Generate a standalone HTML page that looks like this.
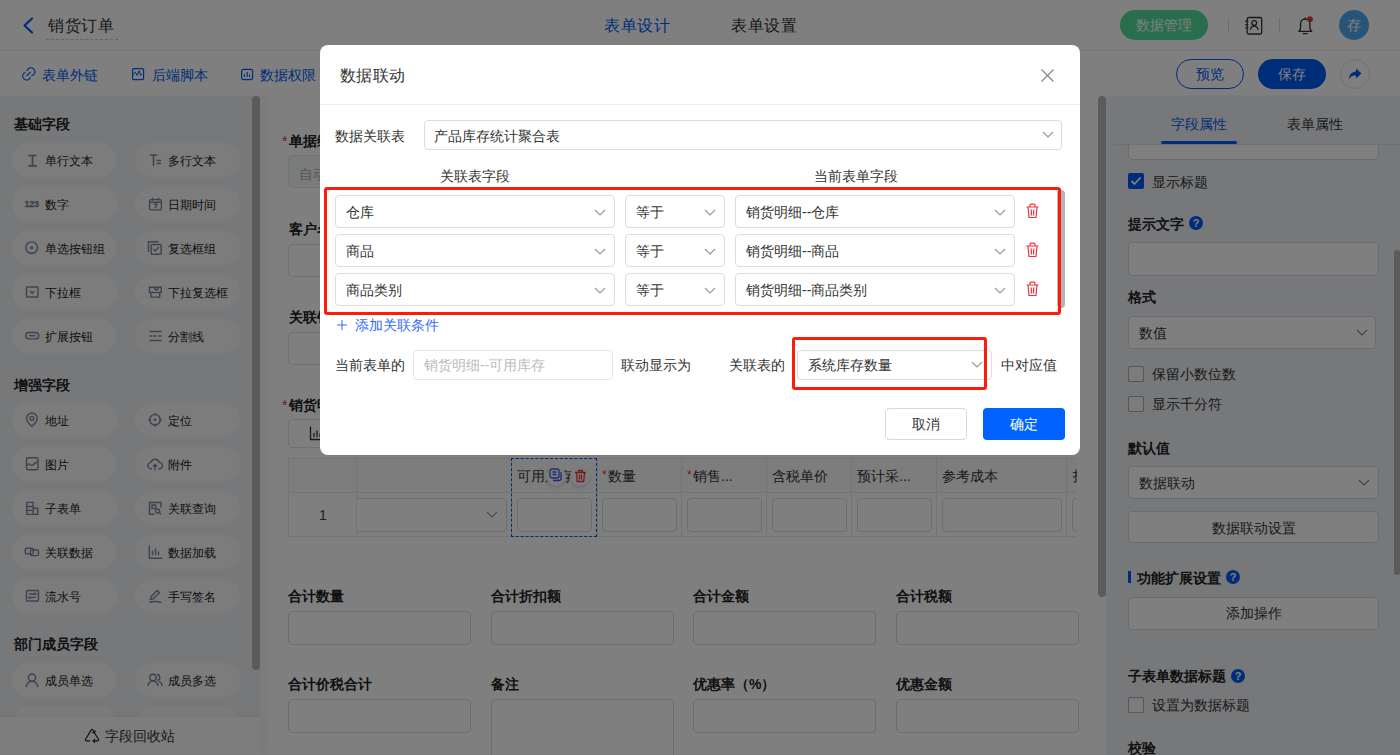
<!DOCTYPE html>
<html><head><meta charset="utf-8">
<style>
*{box-sizing:border-box;margin:0;padding:0}
html,body{width:1400px;height:755px;overflow:hidden;background:#fff;font-family:"Liberation Sans",sans-serif;color:#333;font-size:14px}
.a{position:absolute}
.t{position:absolute;line-height:20px;white-space:nowrap;font-size:14px}
.b{font-weight:bold;color:#222}
.inp{position:absolute;border:1px solid #dcdfe6;border-radius:4px;background:#fff}
.chev{position:absolute;width:10px;height:6px}
svg{display:block}
</style></head><body>

<!-- ================= HEADER ================= -->
<div class="a" style="left:0;top:0;width:1400px;height:50px;background:#fff"></div>
<svg class="a" style="left:22px;top:17px" width="12" height="17" viewBox="0 0 12 17"><path d="M10 1.5L2.5 8.5L10 15.5" fill="none" stroke="#005bf5" stroke-width="2.2" stroke-linecap="round" stroke-linejoin="round"/></svg>
<div class="t" style="left:48px;top:16px;font-size:16px;color:#333;letter-spacing:0.5px">销货订单</div>
<div class="a" style="left:46px;top:39px;width:72px;border-top:1px dashed #c8c8c8"></div>
<div class="t" style="left:604px;top:16px;font-size:16px;color:#005bf5;letter-spacing:0.5px">表单设计</div>
<div class="t" style="left:731px;top:16px;font-size:16px;color:#333;letter-spacing:0.5px">表单设置</div>

<div class="a" style="left:1120px;top:10px;width:88px;height:30px;border-radius:15px;background:#52dc98"></div>
<div class="t" style="left:1120px;top:15px;width:88px;text-align:center;color:#fff">数据管理</div>
<div class="a" style="left:1228px;top:18px;width:1px;height:14px;background:#d8d8d8"></div>
<div class="a" style="left:1279px;top:18px;width:1px;height:14px;background:#d8d8d8"></div>
<svg class="a" style="left:1244px;top:16px" width="20" height="19" viewBox="0 0 20 19"><rect x="3.2" y="1.5" width="14.5" height="16.5" rx="1.6" fill="none" stroke="#333" stroke-width="1.3"/><circle cx="10.2" cy="7" r="2.4" fill="none" stroke="#333" stroke-width="1.3"/><path d="M6.3 13.8c.5-2.5 1.9-3.6 3.9-3.6s3.4 1.1 3.9 3.6" fill="none" stroke="#333" stroke-width="1.3"/><path d="M1 5.3h3.5M1 8.7h3.5M1 12h3.5" stroke="#333" stroke-width="1.1"/></svg>
<svg class="a" style="left:1296px;top:15px" width="20" height="21" viewBox="0 0 20 21"><path d="M2.8 16.3Q4.6 15.2 4.6 12.2V8.6A4.65 4.65 0 0 1 13.9 8.6V12.2Q13.9 15.2 15.7 16.3Z" fill="none" stroke="#333" stroke-width="1.35" stroke-linejoin="round"/><path d="M7 18.6h4.5" stroke="#333" stroke-width="1.3"/><path d="M9.25 2.4v1.6" stroke="#333" stroke-width="1.3"/><circle cx="14" cy="4.2" r="2.9" fill="#e0393e"/></svg>
<div class="a" style="left:1339px;top:10px;width:30px;height:30px;border-radius:50%;background:#50a8f0"></div>
<div class="t" style="left:1339px;top:15px;width:30px;text-align:center;color:#fff">存</div>

<!-- ================= TOOLBAR ================= -->
<div class="a" style="left:0;top:50px;width:1400px;height:45px;background:#fff"></div>
<div class="a" style="left:0;top:50px;width:1400px;height:1px;background:#ededed"></div>
<svg class="a" style="left:21px;top:67px" width="15" height="15" viewBox="0 0 15 15"><path d="M6.06 3.59A4 4 0 1 1 10.77 8.69" fill="none" stroke="#005bf5" stroke-width="1.1" stroke-linecap="round"/><path d="M9.35 10.44A4 4 0 1 1 3.97 5.4" fill="none" stroke="#005bf5" stroke-width="1.1" stroke-linecap="round"/><path d="M5.9 8.5l3.5-3.3" stroke="#005bf5" stroke-width="1.1" stroke-linecap="round"/></svg>
<div class="t" style="left:42px;top:65px;color:#005bf5">表单外链</div>
<svg class="a" style="left:131px;top:67px" width="14" height="14" viewBox="0 0 14 14"><rect x="1.6" y="1.6" width="11" height="11" rx="1.3" fill="none" stroke="#005bf5" stroke-width="1.2"/><path d="M2 7.2l2.3-2 1.8 3.2 2-4.6 1.5 4.4 1.4-1" fill="none" stroke="#005bf5" stroke-width="1"/></svg>
<div class="t" style="left:152px;top:65px;color:#005bf5">后端脚本</div>
<svg class="a" style="left:240px;top:67px" width="14" height="14" viewBox="0 0 14 14"><rect x="1.6" y="2.4" width="11" height="10.2" rx="2" fill="none" stroke="#005bf5" stroke-width="1.2"/><path d="M4.4 10V7.2M7.2 10V5M9.6 10V7.2" stroke="#005bf5" stroke-width="1.1"/></svg>
<div class="t" style="left:260px;top:65px;color:#005bf5">数据权限</div>

<div class="a" style="left:1176px;top:59px;width:68px;height:30px;border-radius:15px;border:1px solid #005bf5"></div>
<div class="t" style="left:1176px;top:64px;width:68px;text-align:center;color:#005bf5">预览</div>
<div class="a" style="left:1258px;top:59px;width:68px;height:30px;border-radius:15px;background:#005bf5"></div>
<div class="t" style="left:1258px;top:64px;width:68px;text-align:center;color:#fff">保存</div>
<div class="a" style="left:1340px;top:59px;width:30px;height:30px;border-radius:50%;border:1px solid #dde3ee"></div>
<svg class="a" style="left:1347px;top:66px" width="16" height="16" viewBox="0 0 16 16"><path d="M9 2.5l5.5 5-5.5 5V9.5C5.5 9.3 3.3 10.5 1.8 13.3 2.2 8.8 4.5 6 9 5.6z" fill="#005bf5"/></svg>

<!-- SIDEBAR -->
<div class="a" style="left:0px;top:96px;width:268px;height:659px;background:#eff1f4"></div>
<div class="a" style="left:0px;top:95px;width:268px;height:1px;background:#f7f8f9"></div>
<div class="t" style="left:14px;top:114px;font-size:14px;color:#222;font-weight:bold;">基础字段</div>
<div class="t" style="left:14px;top:375px;font-size:14px;color:#222;font-weight:bold;">增强字段</div>
<div class="t" style="left:14px;top:634px;font-size:14px;color:#222;font-weight:bold;">部门成员字段</div>
<div class="a" style="left:12px;top:143px;width:105px;height:34px;border-radius:17px;background:#f8f9fb"></div>
<svg class="a" style="left:24px;top:152px" width="16" height="16" viewBox="0 0 16 16"><path d="M4.3 3.5h8.5M4.3 13.8h8.5M8.5 3.5v10.3" fill="none" stroke="#7886a0" stroke-width="1.7"/></svg>
<div class="t" style="left:45px;top:151px;font-size:12px;color:#1a1a1a;">单行文本</div>
<div class="a" style="left:135px;top:143px;width:105px;height:34px;border-radius:17px;background:#f8f9fb"></div>
<svg class="a" style="left:147px;top:152px" width="16" height="16" viewBox="0 0 16 16"><path d="M2.8 3h7.5M6.5 3v11M9.5 8.5h4.5M9.5 11.5h4.5" fill="none" stroke="#7886a0" stroke-width="1.6"/></svg>
<div class="t" style="left:168px;top:151px;font-size:12px;color:#1a1a1a;">多行文本</div>
<div class="a" style="left:12px;top:187px;width:105px;height:34px;border-radius:17px;background:#f8f9fb"></div>
<svg class="a" style="left:24px;top:196px" width="16" height="16" viewBox="0 0 16 16"><text x="0.5" y="11" font-size="9" font-weight="bold" fill="#7886a0" stroke="#7886a0" stroke-width="0.35" font-family="Liberation Sans" letter-spacing="-0.2">123</text></svg>
<div class="t" style="left:45px;top:195px;font-size:12px;color:#1a1a1a;">数字</div>
<div class="a" style="left:135px;top:187px;width:105px;height:34px;border-radius:17px;background:#f8f9fb"></div>
<svg class="a" style="left:147px;top:196px" width="16" height="16" viewBox="0 0 16 16"><rect x="2.6" y="3.6" width="11.8" height="10.3" rx="1.5" fill="none" stroke="#7886a0" stroke-width="1.4"/><path d="M2.6 6.3h11.8M5.5 1.8v3M11.5 1.8v3M6.8 8.3h3.2l-1.7 4" fill="none" stroke="#7886a0" stroke-width="1.4"/></svg>
<div class="t" style="left:168px;top:195px;font-size:12px;color:#1a1a1a;">日期时间</div>
<div class="a" style="left:12px;top:231px;width:105px;height:34px;border-radius:17px;background:#f8f9fb"></div>
<svg class="a" style="left:24px;top:240px" width="16" height="16" viewBox="0 0 16 16"><circle cx="7.7" cy="7.7" r="5.8" fill="none" stroke="#7886a0" stroke-width="1.4"/><circle cx="7.7" cy="7.7" r="1.5" fill="#7886a0"/></svg>
<div class="t" style="left:45px;top:239px;font-size:12px;color:#1a1a1a;">单选按钮组</div>
<div class="a" style="left:135px;top:231px;width:105px;height:34px;border-radius:17px;background:#f8f9fb"></div>
<svg class="a" style="left:147px;top:240px" width="16" height="16" viewBox="0 0 16 16"><path d="M1.5 12V1.8h10" fill="none" stroke="#7886a0" stroke-width="1.4"/><rect x="4.2" y="4.5" width="10" height="9.7" rx="1" fill="none" stroke="#7886a0" stroke-width="1.4"/><path d="M6.3 9l2 2 3.5-4" fill="none" stroke="#7886a0" stroke-width="1.4"/></svg>
<div class="t" style="left:168px;top:239px;font-size:12px;color:#1a1a1a;">复选框组</div>
<div class="a" style="left:12px;top:275px;width:105px;height:34px;border-radius:17px;background:#f8f9fb"></div>
<svg class="a" style="left:24px;top:284px" width="16" height="16" viewBox="0 0 16 16"><rect x="2.5" y="3" width="11.5" height="10" rx="1" fill="none" stroke="#7886a0" stroke-width="1.4"/><path d="M6 7l2.2 2.2L10.5 7" fill="none" stroke="#7886a0" stroke-width="1.4"/></svg>
<div class="t" style="left:45px;top:283px;font-size:12px;color:#1a1a1a;">下拉框</div>
<div class="a" style="left:135px;top:275px;width:105px;height:34px;border-radius:17px;background:#f8f9fb"></div>
<svg class="a" style="left:147px;top:284px" width="16" height="16" viewBox="0 0 16 16"><path d="M2.5 3.2h11.7v5.3H2.5zM4 8.5v4.6h8.7V8.5M7.8 3.2v1.6l1.6 1.3 1.6-1.3V3.2" fill="none" stroke="#7886a0" stroke-width="1.4"/></svg>
<div class="t" style="left:168px;top:283px;font-size:12px;color:#1a1a1a;">下拉复选框</div>
<div class="a" style="left:12px;top:319px;width:105px;height:34px;border-radius:17px;background:#f8f9fb"></div>
<svg class="a" style="left:24px;top:328px" width="16" height="16" viewBox="0 0 16 16"><rect x="1.7" y="4.5" width="13" height="6.4" rx="3.2" fill="none" stroke="#7886a0" stroke-width="1.4"/><path d="M5 7.7h6.3" fill="none" stroke="#7886a0" stroke-width="1.4"/></svg>
<div class="t" style="left:45px;top:327px;font-size:12px;color:#1a1a1a;">扩展按钮</div>
<div class="a" style="left:135px;top:319px;width:105px;height:34px;border-radius:17px;background:#f8f9fb"></div>
<svg class="a" style="left:147px;top:328px" width="16" height="16" viewBox="0 0 16 16"><path d="M2.5 3.5h12M2.5 12.5h12M2.5 8h3M6.8 8h3M11.3 8h3.2" fill="none" stroke="#7886a0" stroke-width="1.4"/></svg>
<div class="t" style="left:168px;top:327px;font-size:12px;color:#1a1a1a;">分割线</div>
<div class="a" style="left:12px;top:403px;width:105px;height:34px;border-radius:17px;background:#f8f9fb"></div>
<svg class="a" style="left:24px;top:412px" width="16" height="16" viewBox="0 0 16 16"><path d="M7.9 14.3S2.6 10 2.6 6.3a5.3 5.3 0 0 1 10.6 0c0 3.7-5.3 8-5.3 8z" fill="none" stroke="#7886a0" stroke-width="1.4"/><circle cx="7.9" cy="6.3" r="1.9" fill="none" stroke="#7886a0" stroke-width="1.4"/></svg>
<div class="t" style="left:45px;top:411px;font-size:12px;color:#1a1a1a;">地址</div>
<div class="a" style="left:135px;top:403px;width:105px;height:34px;border-radius:17px;background:#f8f9fb"></div>
<svg class="a" style="left:147px;top:412px" width="16" height="16" viewBox="0 0 16 16"><circle cx="8" cy="7.7" r="5.3" fill="none" stroke="#7886a0" stroke-width="1.4"/><circle cx="8" cy="7.7" r="1.3" fill="#7886a0"/><path d="M8 1v2.6M8 11.8v2.6M1.3 7.7h2.6M12.1 7.7h2.6" fill="none" stroke="#7886a0" stroke-width="1.4"/></svg>
<div class="t" style="left:168px;top:411px;font-size:12px;color:#1a1a1a;">定位</div>
<div class="a" style="left:12px;top:447px;width:105px;height:34px;border-radius:17px;background:#f8f9fb"></div>
<svg class="a" style="left:24px;top:456px" width="16" height="16" viewBox="0 0 16 16"><rect x="2.5" y="1.7" width="11.5" height="12" rx="1.5" fill="none" stroke="#7886a0" stroke-width="1.4"/><path d="M2.5 9.8c2-3.2 3.3-1.6 4.5-.6 1.3 1 3-1.5 7-4.2" fill="none" stroke="#7886a0" stroke-width="1.4"/></svg>
<div class="t" style="left:45px;top:455px;font-size:12px;color:#1a1a1a;">图片</div>
<div class="a" style="left:135px;top:447px;width:105px;height:34px;border-radius:17px;background:#f8f9fb"></div>
<svg class="a" style="left:147px;top:456px" width="16" height="16" viewBox="0 0 16 16"><path d="M5 12.8H4.3a3.2 3.2 0 0 1-.4-6.4 4.3 4.3 0 0 1 8.3 0 3.2 3.2 0 0 1 .1 6.4h-.8M8 14.5V8.5M6 10.5l2-2 2 2" fill="none" stroke="#7886a0" stroke-width="1.4"/></svg>
<div class="t" style="left:168px;top:455px;font-size:12px;color:#1a1a1a;">附件</div>
<div class="a" style="left:12px;top:491px;width:105px;height:34px;border-radius:17px;background:#f8f9fb"></div>
<svg class="a" style="left:24px;top:500px" width="16" height="16" viewBox="0 0 16 16"><path d="M2.8 2.4h6.4v12H2.8zM9.2 8.2h4.5v6.2H9.2M2.8 6.5h6.4M2.8 10.4h6.4" fill="none" stroke="#7886a0" stroke-width="1.4"/></svg>
<div class="t" style="left:45px;top:499px;font-size:12px;color:#1a1a1a;">子表单</div>
<div class="a" style="left:135px;top:491px;width:105px;height:34px;border-radius:17px;background:#f8f9fb"></div>
<svg class="a" style="left:147px;top:500px" width="16" height="16" viewBox="0 0 16 16"><path d="M14 7.5V2.5H2.5v11.7h5" fill="none" stroke="#7886a0" stroke-width="1.4"/><path d="M5 5h3.6v3.5H5z" fill="none" stroke="#7886a0" stroke-width="1.4"/><circle cx="10.7" cy="11" r="2" fill="none" stroke="#7886a0" stroke-width="1.4"/><path d="M12.2 12.5l1.8 1.8" fill="none" stroke="#7886a0" stroke-width="1.4"/></svg>
<div class="t" style="left:168px;top:499px;font-size:12px;color:#1a1a1a;">关联查询</div>
<div class="a" style="left:12px;top:535px;width:105px;height:34px;border-radius:17px;background:#f8f9fb"></div>
<svg class="a" style="left:24px;top:544px" width="16" height="16" viewBox="0 0 16 16"><rect x="1.3" y="4.3" width="8" height="5.6" rx="1.5" fill="none" stroke="#7886a0" stroke-width="1.4"/><rect x="6.3" y="6" width="8.2" height="5.6" rx="1.5" fill="none" stroke="#7886a0" stroke-width="1.4"/></svg>
<div class="t" style="left:45px;top:543px;font-size:12px;color:#1a1a1a;">关联数据</div>
<div class="a" style="left:135px;top:535px;width:105px;height:34px;border-radius:17px;background:#f8f9fb"></div>
<svg class="a" style="left:147px;top:544px" width="16" height="16" viewBox="0 0 16 16"><path d="M2.3 1.5v12.8h13M5.5 11.3V6.5M8.5 11.3V4.5M11.5 11.3V7.5" fill="none" stroke="#7886a0" stroke-width="1.4"/></svg>
<div class="t" style="left:168px;top:543px;font-size:12px;color:#1a1a1a;">数据加载</div>
<div class="a" style="left:12px;top:579px;width:105px;height:34px;border-radius:17px;background:#f8f9fb"></div>
<svg class="a" style="left:24px;top:588px" width="16" height="16" viewBox="0 0 16 16"><rect x="2.5" y="2.5" width="12" height="10.5" rx="1" fill="none" stroke="#7886a0" stroke-width="1.4"/><path d="M5 6h7l-1.5-1.3M12 9.4H5l1.5 1.3" fill="none" stroke="#7886a0" stroke-width="1.4"/></svg>
<div class="t" style="left:45px;top:587px;font-size:12px;color:#1a1a1a;">流水号</div>
<div class="a" style="left:135px;top:579px;width:105px;height:34px;border-radius:17px;background:#f8f9fb"></div>
<svg class="a" style="left:147px;top:588px" width="16" height="16" viewBox="0 0 16 16"><path d="M3.5 11.5l.4-2.6 6.3-6.3 2.2 2.2-6.3 6.3zM2.5 14.5c3-1.5 5.5-1.5 12 0" fill="none" stroke="#7886a0" stroke-width="1.4"/></svg>
<div class="t" style="left:168px;top:587px;font-size:12px;color:#1a1a1a;">手写签名</div>
<div class="a" style="left:12px;top:663px;width:105px;height:34px;border-radius:17px;background:#f8f9fb"></div>
<svg class="a" style="left:24px;top:672px" width="16" height="16" viewBox="0 0 16 16"><circle cx="8" cy="5.6" r="3.6" fill="none" stroke="#7886a0" stroke-width="1.4"/><path d="M2.3 15a5.7 5.7 0 0 1 11.4 0" fill="none" stroke="#7886a0" stroke-width="1.4"/></svg>
<div class="t" style="left:45px;top:671px;font-size:12px;color:#1a1a1a;">成员单选</div>
<div class="a" style="left:135px;top:663px;width:105px;height:34px;border-radius:17px;background:#f8f9fb"></div>
<svg class="a" style="left:147px;top:672px" width="16" height="16" viewBox="0 0 16 16"><circle cx="6" cy="5.5" r="3.2" fill="none" stroke="#7886a0" stroke-width="1.4"/><path d="M1 14a5 5 0 0 1 10 0M10 2.3a3.2 3.2 0 0 1 .3 6.3M12 9.3a5 5 0 0 1 3 4.7" fill="none" stroke="#7886a0" stroke-width="1.4"/></svg>
<div class="t" style="left:168px;top:671px;font-size:12px;color:#1a1a1a;">成员多选</div>
<div class="a" style="left:12px;top:707px;width:105px;height:34px;border-radius:17px;background:#f8f9fb"></div>
<div class="a" style="left:135px;top:707px;width:105px;height:34px;border-radius:17px;background:#f8f9fb"></div>
<div class="a" style="left:260px;top:95px;width:8px;height:660px;background:#f7f8fa"></div>
<div class="a" style="left:252px;top:96px;width:8px;height:574px;border-radius:4px;background:#b6b6b6"></div>
<div class="a" style="left:0px;top:717px;width:260px;height:38px;background:#fafafa;box-shadow:0 -3px 8px rgba(0,0,0,.05)"></div>
<svg class="a" style="left:84px;top:728px" width="16" height="15" viewBox="0 0 16 15"><path d="M6.3 3.4L1.6 11.2Q0.9 12.9 2.7 12.9H5.6M9.7 3.6L14.4 11.2Q15.1 12.9 13.3 12.9H9.2M10.6 11.4L9 12.9 10.6 14.4M5.6 4.6L7 2.2Q8 0.6 9 2.2L10.3 4.4M8.6 4.6h1.9l.6-1.8" fill="none" stroke="#222" stroke-width="1.15" stroke-linejoin="round" stroke-linecap="round"/></svg>
<div class="t" style="left:105px;top:726px;font-size:14px;color:#333;">字段回收站</div>
<!-- CANVAS -->
<div class="a" style="left:268px;top:95px;width:830px;height:660px;background:#fff"></div>
<div class="t" style="left:282px;top:131px;font-size:14px;color:#e53935;">*</div>
<div class="t" style="left:289px;top:131px;font-size:14px;color:#222;font-weight:bold;">单据编号</div>
<div class="a" style="left:288px;top:155px;width:390px;height:33px;border:1px solid #e6e6e6;border-radius:4px;background:#f5f6f7"></div>
<div class="t" style="left:299px;top:164px;font-size:14px;color:#aaa;">自动生成</div>
<div class="t" style="left:289px;top:219px;font-size:14px;color:#222;font-weight:bold;">客户名称</div>
<div class="a" style="left:288px;top:244px;width:390px;height:33px;border:1px solid #e1e1e1;border-radius:4px;background:#fff"></div>
<div class="t" style="left:289px;top:307px;font-size:14px;color:#222;font-weight:bold;">关联销售单</div>
<div class="a" style="left:288px;top:332px;width:390px;height:33px;border:1px solid #e1e1e1;border-radius:4px;background:#fff"></div>
<div class="t" style="left:282px;top:395px;font-size:14px;color:#e53935;">*</div>
<div class="t" style="left:289px;top:395px;font-size:14px;color:#222;font-weight:bold;">销货明细</div>
<div class="a" style="left:288px;top:419px;width:110px;height:29px;border:1px solid #e1e1e1;border-radius:4px;background:#fff"></div>
<svg class="a" style="left:309px;top:425px" width="14" height="16" viewBox="0 0 14 16"><path d="M1.5 1.5v13h12M5 12V8M8 12V5.5M11 12V8.5" fill="none" stroke="#333" stroke-width="1.3"/></svg>
<div class="a" style="left:288px;top:458px;width:790px;height:79px;border:1px solid #e8e8e8;border-right:none;background:#fff"></div>
<div class="a" style="left:289px;top:459px;width:789px;height:33px;background:#fafafa"></div>
<div class="a" style="left:289px;top:492px;width:789px;height:1px;background:#e8e8e8"></div>
<div class="a" style="left:356px;top:459px;width:1px;height:77px;background:#e8e8e8"></div>
<div class="a" style="left:511px;top:459px;width:1px;height:77px;background:#e8e8e8"></div>
<div class="a" style="left:597px;top:459px;width:1px;height:77px;background:#e8e8e8"></div>
<div class="a" style="left:681px;top:459px;width:1px;height:77px;background:#e8e8e8"></div>
<div class="a" style="left:766px;top:459px;width:1px;height:77px;background:#e8e8e8"></div>
<div class="a" style="left:851px;top:459px;width:1px;height:77px;background:#e8e8e8"></div>
<div class="a" style="left:936px;top:459px;width:1px;height:77px;background:#e8e8e8"></div>
<div class="a" style="left:1066px;top:459px;width:1px;height:77px;background:#e8e8e8"></div>
<div class="a" style="left:350px;top:498px;width:157px;height:34px;border:1px solid #dcdcdc;border-radius:4px;background:#fff"></div>
<div class="a" style="left:289px;top:493px;width:67px;height:43px;background:#fff"></div>
<div class="a" style="left:356px;top:459px;width:1px;height:77px;background:#e8e8e8"></div>
<div class="t" style="left:319px;top:505px;font-size:14px;color:#444;">1</div>
<svg class="a" style="left:486px;top:511px" width="12" height="8" viewBox="0 0 12 8"><path d="M1 1L6.0 6L11 1" fill="none" stroke="#999" stroke-width="1.2"/></svg>
<div class="t" style="left:517px;top:466px;font-size:14px;color:#333;">可用库存</div>
<div class="t" style="left:602px;top:465px;font-size:12px;color:#e53935;">*</div>
<div class="t" style="left:608px;top:466px;font-size:14px;color:#333;">数量</div>
<div class="t" style="left:687px;top:465px;font-size:12px;color:#e53935;">*</div>
<div class="t" style="left:693px;top:466px;font-size:14px;color:#333;">销售...</div>
<div class="t" style="left:772px;top:466px;font-size:14px;color:#333;">含税单价</div>
<div class="t" style="left:857px;top:466px;font-size:14px;color:#333;">预计采...</div>
<div class="t" style="left:942px;top:466px;font-size:14px;color:#333;">参考成本</div>
<div class="t" style="left:1072px;top:466px;font-size:14px;color:#333;">扌</div>
<div class="a" style="left:517px;top:498px;width:75px;height:34px;border:1px solid #dcdcdc;border-radius:4px;background:#fff"></div>
<div class="a" style="left:602px;top:498px;width:75px;height:34px;border:1px solid #dcdcdc;border-radius:4px;background:#fff"></div>
<div class="a" style="left:687px;top:498px;width:75px;height:34px;border:1px solid #dcdcdc;border-radius:4px;background:#fff"></div>
<div class="a" style="left:772px;top:498px;width:75px;height:34px;border:1px solid #dcdcdc;border-radius:4px;background:#fff"></div>
<div class="a" style="left:857px;top:498px;width:75px;height:34px;border:1px solid #dcdcdc;border-radius:4px;background:#fff"></div>
<div class="a" style="left:942px;top:498px;width:120px;height:34px;border:1px solid #dcdcdc;border-radius:4px;background:#fff"></div>
<div class="a" style="left:1072px;top:498px;width:30px;height:34px;border:1px solid #dcdcdc;border-radius:4px;background:#fff"></div>
<div class="a" style="left:1077px;top:458px;width:21px;height:80px;background:#fff"></div>
<div class="a" style="left:511px;top:458px;width:86px;height:79px;border:1px dashed #005bf5"></div>
<div class="a" style="left:546px;top:466px;width:20px;height:20px;border-radius:50%;background:#fafafa;box-shadow:0 2px 3px rgba(60,90,200,.18)"></div>
<div class="a" style="left:570px;top:466px;width:20px;height:20px;border-radius:50%;background:#fafafa;box-shadow:0 2px 3px rgba(60,90,200,.18)"></div>
<svg class="a" style="left:549px;top:468px" width="14" height="14" viewBox="0 0 14 14"><rect x="1" y="1" width="9" height="9" rx="2" fill="none" stroke="#2f5be8" stroke-width="1.3"/><path d="M3.5 4h4M3.5 6.5h4M4 12.5h6a2 2 0 0 0 2-2V4" fill="none" stroke="#2f5be8" stroke-width="1.3"/></svg>
<svg class="a" style="left:574px;top:469px" width="13" height="14" viewBox="0 0 13 14"><path d="M1 3.5h11M4.5 3.5V1.5h4v2M2.5 3.5l.8 9h6.4l.8-9M5.5 5.5v5M7.5 5.5v5" fill="none" stroke="#e53935" stroke-width="1.3"/></svg>
<div class="t" style="left:288px;top:586px;font-size:14px;color:#222;font-weight:bold;">合计数量</div>
<div class="a" style="left:288px;top:611px;width:183px;height:34px;border:1px solid #dcdcdc;border-radius:4px;background:#fff"></div>
<div class="t" style="left:491px;top:586px;font-size:14px;color:#222;font-weight:bold;">合计折扣额</div>
<div class="a" style="left:491px;top:611px;width:183px;height:34px;border:1px solid #dcdcdc;border-radius:4px;background:#fff"></div>
<div class="t" style="left:693px;top:586px;font-size:14px;color:#222;font-weight:bold;">合计金额</div>
<div class="a" style="left:693px;top:611px;width:183px;height:34px;border:1px solid #dcdcdc;border-radius:4px;background:#fff"></div>
<div class="t" style="left:896px;top:586px;font-size:14px;color:#222;font-weight:bold;">合计税额</div>
<div class="a" style="left:896px;top:611px;width:183px;height:34px;border:1px solid #dcdcdc;border-radius:4px;background:#fff"></div>
<div class="t" style="left:288px;top:674px;font-size:14px;color:#222;font-weight:bold;">合计价税合计</div>
<div class="a" style="left:288px;top:699px;width:183px;height:34px;border:1px solid #dcdcdc;border-radius:4px;background:#fff"></div>
<div class="t" style="left:491px;top:674px;font-size:14px;color:#222;font-weight:bold;">备注</div>
<div class="a" style="left:491px;top:699px;width:183px;height:80px;border:1px solid #dcdcdc;border-radius:4px;background:#fff"></div>
<div class="t" style="left:693px;top:674px;font-size:14px;color:#222;font-weight:bold;">优惠率（%）</div>
<div class="a" style="left:693px;top:699px;width:183px;height:34px;border:1px solid #dcdcdc;border-radius:4px;background:#fff"></div>
<div class="t" style="left:896px;top:674px;font-size:14px;color:#222;font-weight:bold;">优惠金额</div>
<div class="a" style="left:896px;top:699px;width:183px;height:34px;border:1px solid #dcdcdc;border-radius:4px;background:#fff"></div>
<div class="a" style="left:1098px;top:96px;width:8px;height:501px;border-radius:4px;background:#b6b6b6"></div>
<!-- RIGHT -->
<div class="a" style="left:1106px;top:96px;width:294px;height:659px;background:#eff1f4"></div>
<div class="a" style="left:1106px;top:95px;width:294px;height:1px;background:#f7f8f9"></div>
<div class="a" style="left:1128px;top:120px;width:251px;height:40px;border:1px solid #d5d8de;border-radius:4px;background:#fff"></div>
<div class="a" style="left:1106px;top:96px;width:294px;height:49px;background:#eff1f4"></div>
<div class="a" style="left:1114px;top:144px;width:286px;height:1px;background:#dfe1e5"></div>
<div class="t" style="left:1171px;top:114px;font-size:14px;color:#005bf5;">字段属性</div>
<div class="t" style="left:1287px;top:114px;font-size:14px;color:#333;">表单属性</div>
<div class="a" style="left:1161px;top:141px;width:76px;height:3px;border-radius:2px;background:#005bf5"></div>
<div class="a" style="left:1128px;top:173px;width:16px;height:16px;background:#005bf5;border-radius:2px"></div>
<svg class="a" style="left:1130px;top:176px" width="12" height="10" viewBox="0 0 12 10"><path d="M1.5 5l3 3L10.5 1.5" fill="none" stroke="#fff" stroke-width="1.8"/></svg>
<div class="t" style="left:1152px;top:172px;font-size:14px;color:#333;">显示标题</div>
<div class="t" style="left:1128px;top:214px;font-size:14px;color:#222;font-weight:bold;">提示文字</div>
<div class="a" style="left:1189px;top:216px;width:14px;height:14px;border-radius:50%;background:#005bf5"></div>
<div class="t" style="left:1189px;top:213px;font-size:11px;color:#fff;font-weight:bold;width:14px;text-align:center">?</div>
<div class="a" style="left:1128px;top:242px;width:251px;height:34px;border:1px solid #d5d8de;border-radius:4px;background:#fff"></div>
<div class="t" style="left:1128px;top:287px;font-size:14px;color:#222;font-weight:bold;">格式</div>
<div class="a" style="left:1128px;top:316px;width:248px;height:33px;border:1px solid #d5d8de;border-radius:4px;background:#fff"></div>
<div class="t" style="left:1139px;top:323px;font-size:14px;color:#333;">数值</div>
<svg class="a" style="left:1356px;top:329px" width="12" height="8" viewBox="0 0 12 8"><path d="M1 1L6.0 6L11 1" fill="none" stroke="#888" stroke-width="1.2"/></svg>
<div class="a" style="left:1128px;top:366px;width:16px;height:16px;border:1px solid #a9adb5;border-radius:1px;background:#f8f9fa"></div>
<div class="t" style="left:1152px;top:364px;font-size:14px;color:#333;">保留小数位数</div>
<div class="a" style="left:1128px;top:396px;width:16px;height:16px;border:1px solid #a9adb5;border-radius:1px;background:#f8f9fa"></div>
<div class="t" style="left:1152px;top:394px;font-size:14px;color:#333;">显示千分符</div>
<div class="t" style="left:1128px;top:438px;font-size:14px;color:#222;font-weight:bold;">默认值</div>
<div class="a" style="left:1128px;top:466px;width:251px;height:33px;border:1px solid #d5d8de;border-radius:4px;background:#fff"></div>
<div class="t" style="left:1139px;top:473px;font-size:14px;color:#333;">数据联动</div>
<svg class="a" style="left:1358px;top:479px" width="12" height="8" viewBox="0 0 12 8"><path d="M1 1L6.0 6L11 1" fill="none" stroke="#888" stroke-width="1.2"/></svg>
<div class="a" style="left:1128px;top:511px;width:251px;height:32px;border:1px solid #d5d8de;border-radius:4px;background:#fff"></div>
<div class="t" style="left:1128px;top:518px;font-size:14px;color:#333;width:251px;text-align:center">数据联动设置</div>
<div class="a" style="left:1128px;top:571px;width:3px;height:12px;background:#005bf5"></div>
<div class="t" style="left:1137px;top:568px;font-size:14px;color:#222;font-weight:bold;">功能扩展设置</div>
<div class="a" style="left:1226px;top:570px;width:14px;height:14px;border-radius:50%;background:#005bf5"></div>
<div class="t" style="left:1226px;top:567px;font-size:11px;color:#fff;font-weight:bold;width:14px;text-align:center">?</div>
<div class="a" style="left:1128px;top:597px;width:251px;height:33px;border:1px solid #d5d8de;border-radius:4px;background:#fff"></div>
<div class="t" style="left:1128px;top:603px;font-size:14px;color:#333;width:251px;text-align:center">添加操作</div>
<div class="t" style="left:1128px;top:666px;font-size:14px;color:#222;font-weight:bold;">子表单数据标题</div>
<div class="a" style="left:1231px;top:669px;width:14px;height:14px;border-radius:50%;background:#005bf5"></div>
<div class="t" style="left:1231px;top:666px;font-size:11px;color:#fff;font-weight:bold;width:14px;text-align:center">?</div>
<div class="a" style="left:1128px;top:697px;width:16px;height:16px;border:1px solid #a9adb5;border-radius:1px;background:#f8f9fa"></div>
<div class="t" style="left:1152px;top:695px;font-size:14px;color:#333;">设置为数据标题</div>
<div class="t" style="left:1128px;top:738px;font-size:14px;color:#222;font-weight:bold;">校验</div>
<div class="a" style="left:1394px;top:250px;width:6px;height:325px;border-radius:3px;background:#b6b6b6"></div>
<div class="a" style="left:0px;top:0px;width:1400px;height:755px;background:rgba(0,0,0,.5)"></div>
<!-- MODAL -->
<div class="a" style="left:320px;top:45px;width:760px;height:410px;background:#fff;border-radius:8px"></div>
<div class="t" style="left:340px;top:66px;font-size:16px;color:#333;letter-spacing:0.4px">数据联动</div>
<svg class="a" style="left:1040px;top:68px" width="15" height="15" viewBox="0 0 15 15"><path d="M1.5 1.5l12 12M13.5 1.5l-12 12" stroke="#888" stroke-width="1.3"/></svg>
<div class="a" style="left:320px;top:104px;width:760px;height:1px;background:#eeeeee"></div>
<div class="t" style="left:335px;top:126px;font-size:14px;color:#333;">数据关联表</div>
<div class="a" style="left:424px;top:120px;width:638px;height:30px;border:1px solid #dcdcdc;border-radius:4px"></div>
<div class="t" style="left:434px;top:126px;font-size:14px;color:#333;">产品库存统计聚合表</div>
<svg class="a" style="left:1042px;top:131px" width="12" height="8" viewBox="0 0 12 8"><path d="M1 1L6.0 6L11 1" fill="none" stroke="#999" stroke-width="1.2"/></svg>
<div class="t" style="left:440px;top:166px;font-size:14px;color:#333;">关联表字段</div>
<div class="t" style="left:814px;top:166px;font-size:14px;color:#333;">当前表单字段</div>
<div class="a" style="left:1057px;top:190px;width:8px;height:118px;background:#b4b4b4;border-radius:4px"></div>
<div class="a" style="left:335px;top:195px;width:280px;height:33px;border:1px solid #dcdcdc;border-radius:4px"></div>
<div class="t" style="left:346px;top:202px;font-size:14px;color:#333;">仓库</div>
<svg class="a" style="left:594px;top:209px" width="12" height="8" viewBox="0 0 12 8"><path d="M1 1L6.0 6L11 1" fill="none" stroke="#999" stroke-width="1.2"/></svg>
<div class="a" style="left:625px;top:195px;width:100px;height:33px;border:1px solid #dcdcdc;border-radius:4px"></div>
<div class="t" style="left:636px;top:202px;font-size:14px;color:#333;">等于</div>
<svg class="a" style="left:704px;top:209px" width="12" height="8" viewBox="0 0 12 8"><path d="M1 1L6.0 6L11 1" fill="none" stroke="#999" stroke-width="1.2"/></svg>
<div class="a" style="left:735px;top:195px;width:280px;height:33px;border:1px solid #dcdcdc;border-radius:4px"></div>
<div class="t" style="left:746px;top:202px;font-size:14px;color:#333;">销货明细--仓库</div>
<svg class="a" style="left:994px;top:209px" width="12" height="8" viewBox="0 0 12 8"><path d="M1 1L6.0 6L11 1" fill="none" stroke="#999" stroke-width="1.2"/></svg>
<svg class="a" style="left:1025px;top:203px" width="15" height="16" viewBox="0 0 15 16"><path d="M1.5 4h12M5 4V2.2a1 1 0 0 1 1-1h3a1 1 0 0 1 1 1V4M3 4l1 10.5h7L12 4M6.2 6.5l.3 6M8.8 6.5l-.3 6" fill="none" stroke="#f0323c" stroke-width="1.2"/></svg>
<div class="a" style="left:335px;top:234px;width:280px;height:33px;border:1px solid #dcdcdc;border-radius:4px"></div>
<div class="t" style="left:346px;top:241px;font-size:14px;color:#333;">商品</div>
<svg class="a" style="left:594px;top:248px" width="12" height="8" viewBox="0 0 12 8"><path d="M1 1L6.0 6L11 1" fill="none" stroke="#999" stroke-width="1.2"/></svg>
<div class="a" style="left:625px;top:234px;width:100px;height:33px;border:1px solid #dcdcdc;border-radius:4px"></div>
<div class="t" style="left:636px;top:241px;font-size:14px;color:#333;">等于</div>
<svg class="a" style="left:704px;top:248px" width="12" height="8" viewBox="0 0 12 8"><path d="M1 1L6.0 6L11 1" fill="none" stroke="#999" stroke-width="1.2"/></svg>
<div class="a" style="left:735px;top:234px;width:280px;height:33px;border:1px solid #dcdcdc;border-radius:4px"></div>
<div class="t" style="left:746px;top:241px;font-size:14px;color:#333;">销货明细--商品</div>
<svg class="a" style="left:994px;top:248px" width="12" height="8" viewBox="0 0 12 8"><path d="M1 1L6.0 6L11 1" fill="none" stroke="#999" stroke-width="1.2"/></svg>
<svg class="a" style="left:1025px;top:242px" width="15" height="16" viewBox="0 0 15 16"><path d="M1.5 4h12M5 4V2.2a1 1 0 0 1 1-1h3a1 1 0 0 1 1 1V4M3 4l1 10.5h7L12 4M6.2 6.5l.3 6M8.8 6.5l-.3 6" fill="none" stroke="#f0323c" stroke-width="1.2"/></svg>
<div class="a" style="left:335px;top:273px;width:280px;height:33px;border:1px solid #dcdcdc;border-radius:4px"></div>
<div class="t" style="left:346px;top:280px;font-size:14px;color:#333;">商品类别</div>
<svg class="a" style="left:594px;top:287px" width="12" height="8" viewBox="0 0 12 8"><path d="M1 1L6.0 6L11 1" fill="none" stroke="#999" stroke-width="1.2"/></svg>
<div class="a" style="left:625px;top:273px;width:100px;height:33px;border:1px solid #dcdcdc;border-radius:4px"></div>
<div class="t" style="left:636px;top:280px;font-size:14px;color:#333;">等于</div>
<svg class="a" style="left:704px;top:287px" width="12" height="8" viewBox="0 0 12 8"><path d="M1 1L6.0 6L11 1" fill="none" stroke="#999" stroke-width="1.2"/></svg>
<div class="a" style="left:735px;top:273px;width:280px;height:33px;border:1px solid #dcdcdc;border-radius:4px"></div>
<div class="t" style="left:746px;top:280px;font-size:14px;color:#333;">销货明细--商品类别</div>
<svg class="a" style="left:994px;top:287px" width="12" height="8" viewBox="0 0 12 8"><path d="M1 1L6.0 6L11 1" fill="none" stroke="#999" stroke-width="1.2"/></svg>
<svg class="a" style="left:1025px;top:281px" width="15" height="16" viewBox="0 0 15 16"><path d="M1.5 4h12M5 4V2.2a1 1 0 0 1 1-1h3a1 1 0 0 1 1 1V4M3 4l1 10.5h7L12 4M6.2 6.5l.3 6M8.8 6.5l-.3 6" fill="none" stroke="#f0323c" stroke-width="1.2"/></svg>
<div class="a" style="left:324px;top:187px;width:737px;height:128px;border:3px solid #ff1a0a;border-radius:3px"></div>
<svg class="a" style="left:336px;top:319px" width="12" height="12" viewBox="0 0 12 12"><path d="M6 1v10M1 6h10" stroke="#2e6bff" stroke-width="1"/></svg>
<div class="t" style="left:355px;top:315px;font-size:14px;color:#2e6bff;">添加关联条件</div>
<div class="t" style="left:335px;top:355px;font-size:14px;color:#333;">当前表单的</div>
<div class="a" style="left:413px;top:350px;width:200px;height:30px;border:1px solid #e6e6e6;border-radius:4px"></div>
<div class="t" style="left:424px;top:355px;font-size:14px;color:#bbb;">销货明细--可用库存</div>
<div class="t" style="left:621px;top:355px;font-size:14px;color:#333;">联动显示为</div>
<div class="t" style="left:729px;top:355px;font-size:14px;color:#333;">关联表的</div>
<div class="a" style="left:797px;top:350px;width:195px;height:30px;border:1px solid #dcdcdc;border-radius:4px"></div>
<div class="t" style="left:808px;top:355px;font-size:14px;color:#333;">系统库存数量</div>
<svg class="a" style="left:971px;top:361px" width="12" height="8" viewBox="0 0 12 8"><path d="M1 1L6.0 6L11 1" fill="none" stroke="#999" stroke-width="1.2"/></svg>
<div class="a" style="left:792px;top:337px;width:195px;height:53px;border:3px solid #ff1a0a;border-radius:3px"></div>
<div class="t" style="left:1001px;top:355px;font-size:14px;color:#333;">中对应值</div>
<div class="a" style="left:885px;top:408px;width:82px;height:32px;border:1px solid #d9d9d9;border-radius:4px"></div>
<div class="t" style="left:885px;top:414px;font-size:14px;color:#333;width:82px;text-align:center">取消</div>
<div class="a" style="left:983px;top:408px;width:82px;height:32px;background:#0062ff;border-radius:4px"></div>
<div class="t" style="left:983px;top:414px;font-size:14px;color:#fff;width:82px;text-align:center">确定</div>
</body></html>
